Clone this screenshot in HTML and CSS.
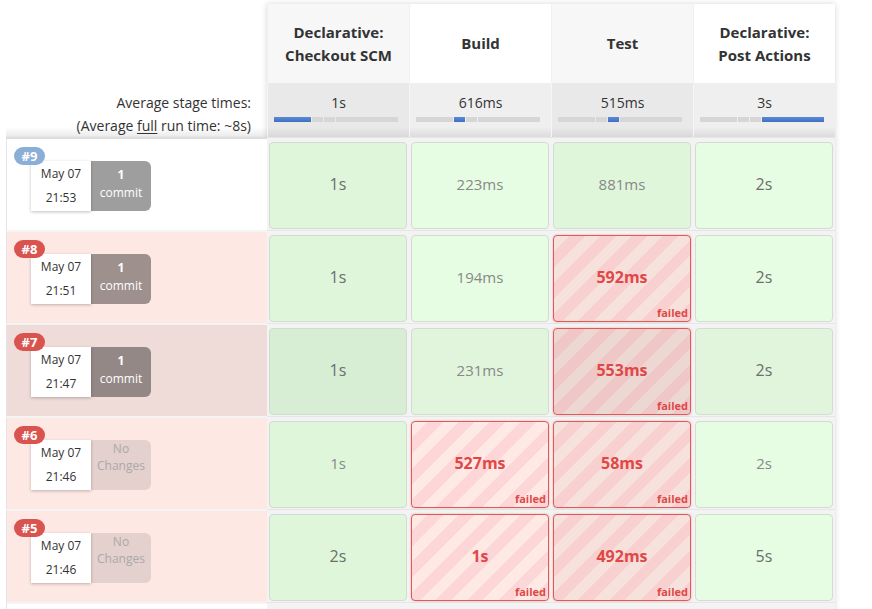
FILE: index.html
```html
<!DOCTYPE html>
<html>
<head>
<meta charset="utf-8">
<link rel="stylesheet" href="styles.css">
</head>
<body>
<div class="sv">
  <div class="left">
    <div class="left-head"></div>
    <div class="left-avg">
      <div>Average stage times:</div>
      <div>(Average <span class="u">full</span> run time: ~8s)</div>
    </div>
    <div class="build ok">
      <span class="badge blue">#9</span>
      <div class="stamp"><div class="date"><div>May 07</div><div>21:53</div></div><div class="chg"><b>1</b><span>commit</span></div></div>
    </div>
    <div class="build fail">
      <span class="badge red">#8</span>
      <div class="stamp"><div class="date"><div>May 07</div><div>21:51</div></div><div class="chg"><b>1</b><span>commit</span></div></div>
    </div>
    <div class="build fail hl">
      <span class="badge red">#7</span>
      <div class="stamp"><div class="date"><div>May 07</div><div>21:47</div></div><div class="chg"><b>1</b><span>commit</span></div></div>
    </div>
    <div class="build fail">
      <span class="badge red">#6</span>
      <div class="stamp"><div class="date"><div>May 07</div><div>21:46</div></div><div class="chg none"><span>No</span><span>Changes</span></div></div>
    </div>
    <div class="build fail">
      <span class="badge red">#5</span>
      <div class="stamp"><div class="date"><div>May 07</div><div>21:46</div></div><div class="chg none"><span>No</span><span>Changes</span></div></div>
    </div>
    <div class="build last"></div>
  </div>
  <div class="tbl">
    <div class="thead">
      <div class="th odd">Declarative:<br>Checkout SCM</div>
      <div class="th">Build</div>
      <div class="th odd">Test</div>
      <div class="th">Declarative:<br>Post Actions</div>
    </div>
    <div class="tavg">
      <div class="ta odd"><div>1s</div><div class="bar"><i class="s1 on"></i><i class="s2"></i><i class="s3"></i><i class="s4"></i></div></div>
      <div class="ta"><div>616ms</div><div class="bar"><i class="s1"></i><i class="s2 on"></i><i class="s3"></i><i class="s4"></i></div></div>
      <div class="ta odd"><div>515ms</div><div class="bar"><i class="s1"></i><i class="s2"></i><i class="s3 on"></i><i class="s4"></i></div></div>
      <div class="ta"><div>3s</div><div class="bar"><i class="s1"></i><i class="s2"></i><i class="s3"></i><i class="s4 on"></i></div></div>
    </div>
    <div class="trow">
      <div class="td odd"><div class="cell ok big">1s</div></div>
      <div class="td"><div class="cell ok">223ms</div></div>
      <div class="td odd"><div class="cell ok">881ms</div></div>
      <div class="td"><div class="cell ok big">2s</div></div>
    </div>
    <div class="trow">
      <div class="td odd"><div class="cell ok big">1s</div></div>
      <div class="td"><div class="cell ok">194ms</div></div>
      <div class="td odd"><div class="cell bad">592ms<span class="lbl">failed</span></div></div>
      <div class="td"><div class="cell ok big">2s</div></div>
    </div>
    <div class="trow hl">
      <div class="td odd"><div class="cell ok big">1s</div></div>
      <div class="td"><div class="cell ok">231ms</div></div>
      <div class="td odd"><div class="cell bad">553ms<span class="lbl">failed</span></div></div>
      <div class="td"><div class="cell ok big">2s</div></div>
    </div>
    <div class="trow">
      <div class="td odd"><div class="cell ok">1s</div></div>
      <div class="td"><div class="cell bad">527ms<span class="lbl">failed</span></div></div>
      <div class="td odd"><div class="cell bad">58ms<span class="lbl">failed</span></div></div>
      <div class="td"><div class="cell ok">2s</div></div>
    </div>
    <div class="trow">
      <div class="td odd"><div class="cell ok big">2s</div></div>
      <div class="td"><div class="cell bad">1s<span class="lbl">failed</span></div></div>
      <div class="td odd"><div class="cell bad">492ms<span class="lbl">failed</span></div></div>
      <div class="td"><div class="cell ok big">5s</div></div>
    </div>
    <div class="trow last">
      <div class="td odd"></div><div class="td"></div><div class="td odd"></div><div class="td"></div>
    </div>
  </div>
</div>
</body>
</html>
```

FILE: styles.css
```css
* { box-sizing: border-box; }
html, body { margin: 0; padding: 0; background: #fff; }
body {
  font-family: "Open Sans", "DejaVu Sans", sans-serif;
  color: #333;
  width: 872px;
  height: 609px;
  overflow: hidden;
}
.sv {
  display: flex;
  padding-left: 6px;
}
.left {
  width: 261px;
  flex: none;
}
.left-head { height: 83px; }
.left-avg {
  height: 54px;
  padding: 8px 16px 0 0;
  text-align: right;
  font-size: 14px;
  line-height: 23px;
  background: linear-gradient(#fff 0, #fff 44px, #ececec 53px, #e2e2e2 54px);
}
.u { text-decoration: underline; text-underline-offset: 2px; }
.build {
  position: relative;
  height: 93px;
  border-top: 2px solid #ececec;
  border-left: 1px solid #e4e4e4;
  background: #fff;
}
.build.fail { background: #fee8e4; }
.build.hl { background: #efdcd8; }
.build.ok { border-top-color: #dedede; }
.build.last { height: 20px; background: #fff; }
.build + .build { border-top-color: #f4f4f4; }
.badge {
  position: absolute;
  left: 7px;
  top: 8px;
  z-index: 2;
  height: 18px;
  min-width: 31px;
  padding: 0 6px;
  border-radius: 9px;
  color: #fff;
  font-size: 13px;
  font-weight: 700;
  line-height: 18px;
  text-align: center;
}
.badge.blue { background: #8aaed6; }
.badge.red { background: #d9534f; }
.stamp {
  display: flex;
  margin: 22px 0 0 24px;
  height: 50px;
}
.date {
  width: 60px;
  background: #fff;
  box-shadow: 0 1px 3px rgba(0,0,0,.25);
  font-size: 12px;
  line-height: 24px;
  text-align: center;
  padding-top: 1px;
  position: relative;
  z-index: 1;
}
.chg {
  width: 60px;
  border-radius: 0 6px 6px 0;
  background: rgba(0,0,0,.38);
  color: #fff;
  font-size: 12px;
  line-height: 18px;
  display: flex;
  flex-direction: column;
  align-items: center;
  padding-top: 5px;
}
.chg b { font-weight: 700; }
.chg.none {
  background: rgba(0,0,0,.1);
  color: #aaa;
  line-height: 17px;
  padding-top: 0;
}
.tbl {
  width: 568px;
  flex: none;
  margin-top: 4px;
  box-shadow: 0 0 6px rgba(0,0,0,.16);
  background: #f2f2f2;
}
.thead, .tavg, .trow { display: flex; }
.th {
  width: 142px;
  height: 79px;
  display: flex;
  align-items: center;
  justify-content: center;
  text-align: center;
  font-size: 15px;
  font-weight: 700;
  line-height: 23px;
  background: #fff;
  border-left: 1px solid #f0f0f0;
}
.th.odd { background: #f7f7f7; }
.ta {
  width: 142px;
  height: 54px;
  padding: 8px 6px 0 6px;
  text-align: center;
  font-size: 14px;
  line-height: 23px;
  background: linear-gradient(#efefef 0, #efefef 44px, #dcdcdc 54px);
  border-left: 1px solid #f6f6f6;
}
.ta.odd { background: linear-gradient(#e9e9e9 0, #e9e9e9 44px, #d8d8d8 54px); }
.bar {
  display: flex;
  gap: 1px;
  width: 124px;
  height: 5px;
  margin-top: 3px;
}
.bar i {
  display: block;
  height: 5px;
  background: #d6d6d6;
}
.bar .s1 { width: 37px; }
.bar .s2 { width: 11px; }
.bar .s3 { width: 11px; }
.bar .s4 { flex: 1; }
.bar i.on { background: linear-gradient(#5b8ad6, #3f6fc2); }
.trow { height: 93px; }
.trow.last { height: 20px; }
.td {
  width: 142px;
  padding: 4px 2px 1px 2px;
  border-top: 1px solid #e6e6e6;
  background: #f3f3f3;
}
.cell {
  position: relative;
  height: 87px;
  padding-bottom: 4px;
  border: 1px solid #d3dbd2;
  border-radius: 4px;
  display: flex;
  align-items: center;
  justify-content: center;
  font-size: 15px;
  color: #888;
}
.cell.big { font-size: 16px; color: #6e6e6e; }
.cell.ok { background: #e6fde3; }
.odd .cell.ok { background: #dff6db; }
.hl .cell.ok { background: #e0f5dc; }
.hl .odd .cell.ok { background: #d8eed4; }
.cell.bad {
  border: 1px solid #e05858;
  box-shadow: 0 0 2px rgba(224,80,80,.5);
  color: #e04848;
  font-weight: 700;
  font-size: 16px;
  background: repeating-linear-gradient(135deg, #ffe9e5 0, #ffe9e5 11px, #fdd7d7 11px, #fdd7d7 22px);
}
.odd .cell.bad {
  background: repeating-linear-gradient(135deg, #f6e1dc 0, #f6e1dc 11px, #f8d0d0 11px, #f8d0d0 22px);
}
.hl .odd .cell.bad {
  background: repeating-linear-gradient(135deg, #ecd7d3 0, #ecd7d3 11px, #efc7c7 11px, #efc7c7 22px);
}
.lbl {
  position: absolute;
  right: 2px;
  bottom: 1px;
  font-size: 11px;
  font-weight: 700;
  line-height: 14px;
}
```
